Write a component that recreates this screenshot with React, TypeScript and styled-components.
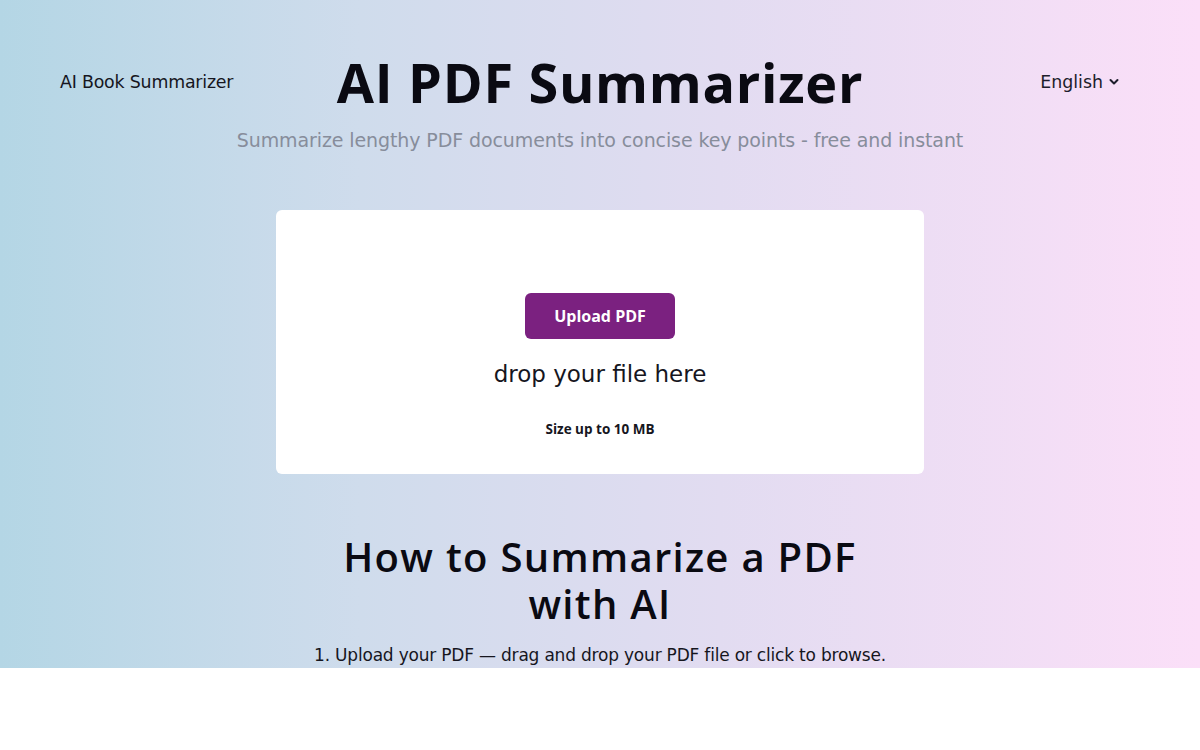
import React from "react";
import styled, { createGlobalStyle } from "styled-components";

const Global = createGlobalStyle`
  html, body { margin: 0; padding: 0; background: #ffffff; }
  body { font-family: "DejaVu Sans", "Open Sans", sans-serif; color: #111; }
  * { box-sizing: border-box; }
`;

const Hero = styled.section`
  height: 668px;
  background: linear-gradient(90deg, #b4d6e5 0%, #cfdcec 30%, #e2dcf1 60%, #fbdff8 100%);
  display: flex;
  flex-direction: column;
  align-items: center;
  overflow: hidden;
`;

const Header = styled.header`
  width: 100%;
  display: grid;
  grid-template-columns: 1fr auto 1fr;
  align-items: center;
  padding: 52px 60px 0;
`;

const SideLink = styled.a`
  justify-self: start;
  font-size: 17.4px;
  color: #16161e;
  text-decoration: none;
  letter-spacing: -0.2px;
`;

const Title = styled.h1`
  margin: 0;
  font-family: "Open Sans", "DejaVu Sans", sans-serif;
  font-size: 54px;
  font-weight: 700;
  line-height: 60px;
  color: #0a0a12;
  letter-spacing: 0.7px;
`;

const Lang = styled.button`
  justify-self: end;
  margin-right: 20px;
  display: flex;
  align-items: center;
  gap: 5px;
  border: none;
  background: none;
  padding: 0;
  font-family: inherit;
  font-size: 17.4px;
  color: #1d1d2b;
`;

const Subtitle = styled.p`
  margin: 17px 0 0;
  font-size: 19px;
  color: #878d9b;
  letter-spacing: -0.1px;
`;

const Card = styled.div`
  margin-top: 59px;
  width: 648px;
  height: 264px;
  background: #fff;
  border-radius: 6px;
  display: flex;
  flex-direction: column;
  align-items: center;
  padding-top: 83px;
`;

const UploadButton = styled.button`
  width: 150px;
  height: 46px;
  border: none;
  border-radius: 6px;
  background: #7b2180;
  color: #fff;
  font-family: "Open Sans", "DejaVu Sans", sans-serif;
  font-size: 16px;
  font-weight: 700;
`;

const DropText = styled.div`
  margin-top: 22px;
  font-size: 23px;
  color: #16161e;
`;

const SizeNote = styled.div`
  margin-top: 33px;
  font-family: "Open Sans", "DejaVu Sans", sans-serif;
  font-size: 13.5px;
  font-weight: 700;
  color: #16161e;
`;

const HowTitle = styled.h2`
  margin: 59px 0 0;
  width: 580px;
  text-align: center;
  font-family: "Open Sans", "DejaVu Sans", sans-serif;
  font-size: 40px;
  font-weight: 600;
  line-height: 47px;
  color: #0a0a12;
  letter-spacing: 1.3px;
`;

const Step = styled.p`
  margin: 18px 0 0;
  font-size: 17px;
  color: #16161e;
  letter-spacing: -0.2px;
`;

const Chevron = () => (
  <svg width="12" height="12" viewBox="0 0 24 24" fill="none" stroke="#1d1d2b" strokeWidth="4" strokeLinecap="round" strokeLinejoin="round">
    <path d="M5 8l7 7 7-7" />
  </svg>
);

export default function App() {
  return (
    <>
      <Global />
      <Hero>
        <Header>
          <SideLink href="#">AI Book Summarizer</SideLink>
          <Title>AI PDF Summarizer</Title>
          <Lang>English <Chevron /></Lang>
        </Header>
        <Subtitle>Summarize lengthy PDF documents into concise key points - free and instant</Subtitle>
        <Card>
          <UploadButton>Upload PDF</UploadButton>
          <DropText>drop your file here</DropText>
          <SizeNote>Size up to 10 MB</SizeNote>
        </Card>
        <HowTitle>How to Summarize a PDF with AI</HowTitle>
        <Step>1. Upload your PDF — drag and drop your PDF file or click to browse.</Step>
      </Hero>
    </>
  );
}
